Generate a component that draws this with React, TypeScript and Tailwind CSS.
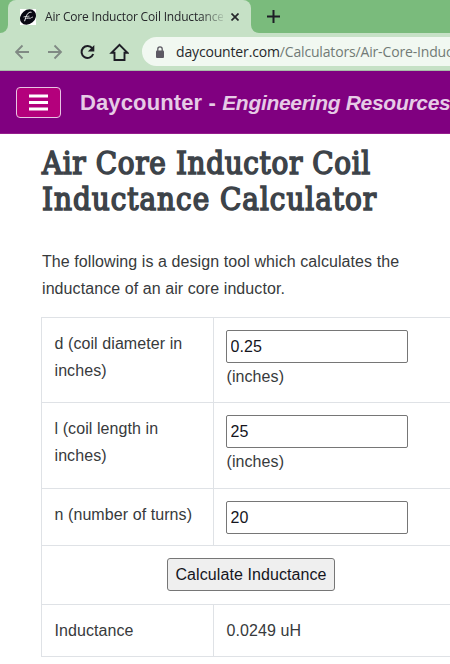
import { useState } from 'react';

interface Field {
  label: string;
  value: string;
  unit?: string;
  height: string;
}

const fields: Field[] = [
  { label: 'd (coil diameter in inches)', value: '0.25', unit: '(inches)', height: 'h-[85px]' },
  { label: 'l (coil length in inches)', value: '25', unit: '(inches)', height: 'h-[86px]' },
  { label: 'n (number of turns)', value: '20', height: 'h-[57px]' },
];

function TabStrip() {
  return (
    <div className="flex h-[33px] bg-[#7abb7c]">
      <div className="w-2 bg-[#c6e1c6]">
        <div className="h-full rounded-br-lg bg-[#7abb7c]" />
      </div>
      <div className="flex w-[243px] items-center rounded-t-lg bg-[#c6e1c6] pl-3 text-[#26282b]">
        <svg width="16" height="16" viewBox="0 0 16 16" className="shrink-0">
          <rect width="16" height="16" fill="#fff" />
          <ellipse cx="8" cy="8" rx="8.6" ry="7" transform="rotate(-40 8 8)" fill="#080812" />
          <path d="M11.500 3.300C8 2.500 6.200 6.300 4.600 12.200" fill="none" stroke="#fff" strokeWidth="1" />
          <path d="M3.500 8c2-.8 3.500-.4 6-.9M6.500 9.900c.5-1.900 1.600-1.300 1.200 0 1.200-1.900 2-1.500 1.900-.3 1-.3 1.500-1 3.400-1.700" fill="none" stroke="#fff" strokeWidth="0.7" />
        </svg>
        <span className="ml-[9px] w-[178px] overflow-hidden whitespace-nowrap font-['Open_Sans',sans-serif] text-[12px] tracking-[-0.18px] [mask-image:linear-gradient(to_right,#000_155px,transparent_182px)]">
          Air Core Inductor Coil Inductance
        </span>
        <svg width="8" height="8" viewBox="0 0 8 8" className="ml-2 shrink-0">
          <path d="M.5.5l7 7M7.500.5l-7 7" stroke="#26282b" strokeWidth="1.700" />
        </svg>
      </div>
      <div className="flex-1 bg-[#c6e1c6]">
        <div className="flex h-full items-center rounded-bl-lg bg-[#7abb7c] pl-4">
          <svg width="13" height="13" viewBox="0 0 13 13">
            <path d="M6.500 0v13M0 6.500h13" stroke="#1d1d25" strokeWidth="2" />
          </svg>
        </div>
      </div>
    </div>
  );
}

function Toolbar() {
  return (
    <div className="flex h-[38px] items-center border-b border-[#a7bda8] bg-[#c6e1c6] pl-[15px]">
      <svg width="114" height="18" viewBox="0 0 114 18" fill="none" className="shrink-0">
        <g stroke="#808a84" strokeWidth="1.800">
          <path d="M14 9H1.500M7.500 2.500L1 9l6.500 6.500" />
          <path d="M33 9h12.500M39.500 2.500L46 9l-6.500 6.500" />
        </g>
        <path d="M77.300 5.300A6 6 0 1 0 78.200 11" stroke="#1d1d25" strokeWidth="2" />
        <path d="M79.300 2v6.500h-6.500z" fill="#1d1d25" />
        <path d="M96.500 9.800h3V17h10V9.800h3L104.500 1.800z" stroke="#1d1d25" strokeWidth="1.900" />
      </svg>
      <div className="ml-[13px] flex h-[29px] flex-1 items-center overflow-hidden rounded-l-full bg-[#f1f8f1] pl-[14px]">
        <svg width="8" height="12" viewBox="0 0 8 12" className="shrink-0">
          <path d="M1.800 5V3a2.200 2.200 0 0 1 4.400 0v2" fill="none" stroke="#5c5963" strokeWidth="1.300" />
          <rect y="4.500" width="8" height="7.500" rx="1" fill="#5c5963" />
        </svg>
        <span className="ml-3 whitespace-nowrap font-['Open_Sans',sans-serif] text-[14px] tracking-[-0.16px] text-[#717b76]">
          <span className="text-[#26282b]">daycounter.com</span>/Calculators/Air-Core-Induc
        </span>
      </div>
    </div>
  );
}

function SiteHeader() {
  return (
    <header className="flex h-[63px] items-center border-b border-[#941e8c] bg-[#800080] pl-4">
      <button className="flex h-[31px] w-[45px] shrink-0 items-center justify-center rounded border border-[#e8c4e4] bg-[#b4007c]">
        <svg width="19" height="17" viewBox="0 0 19 17">
          <path d="M0 2h19M0 8.500h19M0 15h19" stroke="#fff" strokeWidth="3.200" />
        </svg>
      </button>
      <div className="ml-[19px] whitespace-nowrap text-[22px] font-bold tracking-[0.12px] text-[#e6cbe6]">
        Daycounter - <em className="text-[21px] tracking-[-0.3px]">Engineering Resources</em>
      </div>
    </header>
  );
}

export default function App() {
  const [values, setValues] = useState(fields.map((f) => f.value));

  return (
    <div className="h-[664px] w-[450px] overflow-hidden bg-white font-['Liberation_Sans',Arial,sans-serif] text-[16px] leading-[27px] tracking-[0.08px] text-[#373a3c]">
      <TabStrip />
      <Toolbar />
      <SiteHeader />
      <main className="pl-[41px] pt-[11px]">
        <h1 className="ml-px whitespace-nowrap font-['DejaVu_Serif_Condensed','DejaVu_Serif',serif] text-[31px] leading-9 text-[#3d4349] [-webkit-text-stroke:1.5px_#3d4349]">
          <span className="tracking-[0.65px]">Air Core Inductor Coil</span>
          <br />
          <span className="tracking-[0.98px]">Inductance Calculator</span>
        </h1>
        <p className="ml-px mt-[31px] whitespace-nowrap">
          The following is a design tool which calculates the
          <br />
          inductance of an air core inductor.
        </p>
        <table className="mt-[15px] w-[430px] table-fixed border-collapse [&_td]:border [&_td]:border-[#dfe2e6] [&_td]:pl-[12.500px] [&_td]:pr-3 [&_td]:pt-3 [&_td]:align-top">
          <colgroup>
            <col className="w-[172px]" />
            <col />
          </colgroup>
          <tbody>
            {fields.map((field, i) => (
              <tr key={field.label} className={field.height}>
                <td>{field.label}</td>
                <td>
                  <input
                    value={values[i]}
                    onChange={(e) => setValues(values.map((v, j) => (j === i ? e.target.value : v)))}
                    className="-ml-[0.500px] block h-[33px] w-[182px] rounded-[2px] border border-[#767676] bg-white px-[3.500px] text-[#15151d]"
                  />
                  {field.unit}
                </td>
              </tr>
            ))}
            <tr className="h-[59px]">
              <td colSpan={2}>
                <button className="ml-[112.500px] block h-[33px] w-[168px] whitespace-nowrap rounded-[3px] border border-[#767676] bg-[#efefef] leading-[30px] text-[#15151d]">
                  Calculate Inductance
                </button>
              </td>
            </tr>
            <tr className="h-[52px]">
              <td>Inductance</td>
              <td>0.0249 uH</td>
            </tr>
          </tbody>
        </table>
      </main>
    </div>
  );
}
